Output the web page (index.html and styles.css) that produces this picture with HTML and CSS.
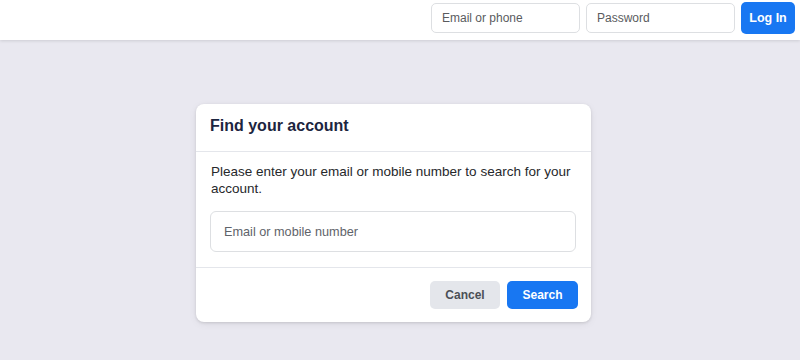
FILE: index.html
```html
<!DOCTYPE html>
<html>
<head>
<meta charset="utf-8">
<link rel="stylesheet" href="styles.css">
</head>
<body>
<header class="topbar">
  <input class="top-input" type="text" placeholder="Email or phone">
  <input class="top-input" type="password" placeholder="Password">
  <button class="login-btn">Log In</button>
</header>
<main class="page">
  <section class="card">
    <div class="card-head">
      <h2 class="card-title">Find your account</h2>
    </div>
    <div class="card-body">
      <p class="card-text">Please enter your email or mobile number to search for your account.</p>
      <input class="search-input" type="text" placeholder="Email or mobile number">
    </div>
    <div class="card-foot">
      <button class="btn btn-cancel">Cancel</button>
      <button class="btn btn-search">Search</button>
    </div>
  </section>
</main>
</body>
</html>
```
FILE: styles.css
```css
* { box-sizing: border-box; }
html, body { margin: 0; height: 100%; }
body {
  font-family: "Liberation Sans", Arial, sans-serif;
  background: #e9e8f0;
  color: #1c1e21;
}
.topbar {
  height: 40px;
  background: #ffffff;
  display: flex;
  justify-content: flex-end;
  align-items: flex-start;
  gap: 6px;
  padding: 3px 5px 0 0;
  box-shadow: 0 1px 3px rgba(0,0,0,0.12);
  position: relative;
}
.top-input {
  width: 149px;
  height: 30px;
  border: 1px solid #dddfe2;
  border-radius: 5px;
  padding: 0 10px;
  font-family: inherit;
  font-size: 12px;
  color: #1c1e21;
  outline: none;
}
.top-input::placeholder { color: #5a5b5e; }
.login-btn {
  width: 54px;
  height: 32px;
  margin-top: -1px;
  border: none;
  border-radius: 5px;
  background: #1877f2;
  color: #ffffff;
  font-family: inherit;
  font-weight: bold;
  font-size: 12.5px;
  padding: 0;
}
.page {
  padding: 64px 0 0 196px;
}
.card {
  width: 395px;
  background: #ffffff;
  border-radius: 8px;
  box-shadow: 0 1px 3px rgba(0,0,0,0.12), 0 2px 8px rgba(0,0,0,0.06);
}
.card-head {
  padding: 12px 14px 0 14px;
  height: 48px;
  border-bottom: 1px solid #e4e6eb;
}
.card-title {
  margin: 0;
  font-size: 16px;
  font-weight: bold;
  color: #1c2540;
  line-height: 20px;
}
.card-body {
  padding: 12px 15px 15px 14px;
  border-bottom: 1px solid #e4e6eb;
}
.card-text {
  margin: 0 0 14px 1px;
  font-size: 13.5px;
  line-height: 16.5px;
  color: #26282b;
}
.search-input {
  display: block;
  width: 100%;
  height: 41px;
  border: 1px solid #dddfe2;
  border-radius: 6px;
  padding: 0 13px;
  font-family: inherit;
  font-size: 12.7px;
  outline: none;
}
.search-input::placeholder { color: #60636a; }
.card-foot {
  display: flex;
  justify-content: flex-end;
  gap: 7px;
  padding: 13px 13px 13px 0;
}
.btn {
  height: 28px;
  border: none;
  border-radius: 5px;
  font-family: inherit;
  font-weight: bold;
  font-size: 12px;
  padding: 0;
}
.btn-cancel {
  width: 70px;
  background: #e4e6eb;
  color: #4b4f56;
}
.btn-search {
  width: 71px;
  background: #1877f2;
  color: #ffffff;
}
```
